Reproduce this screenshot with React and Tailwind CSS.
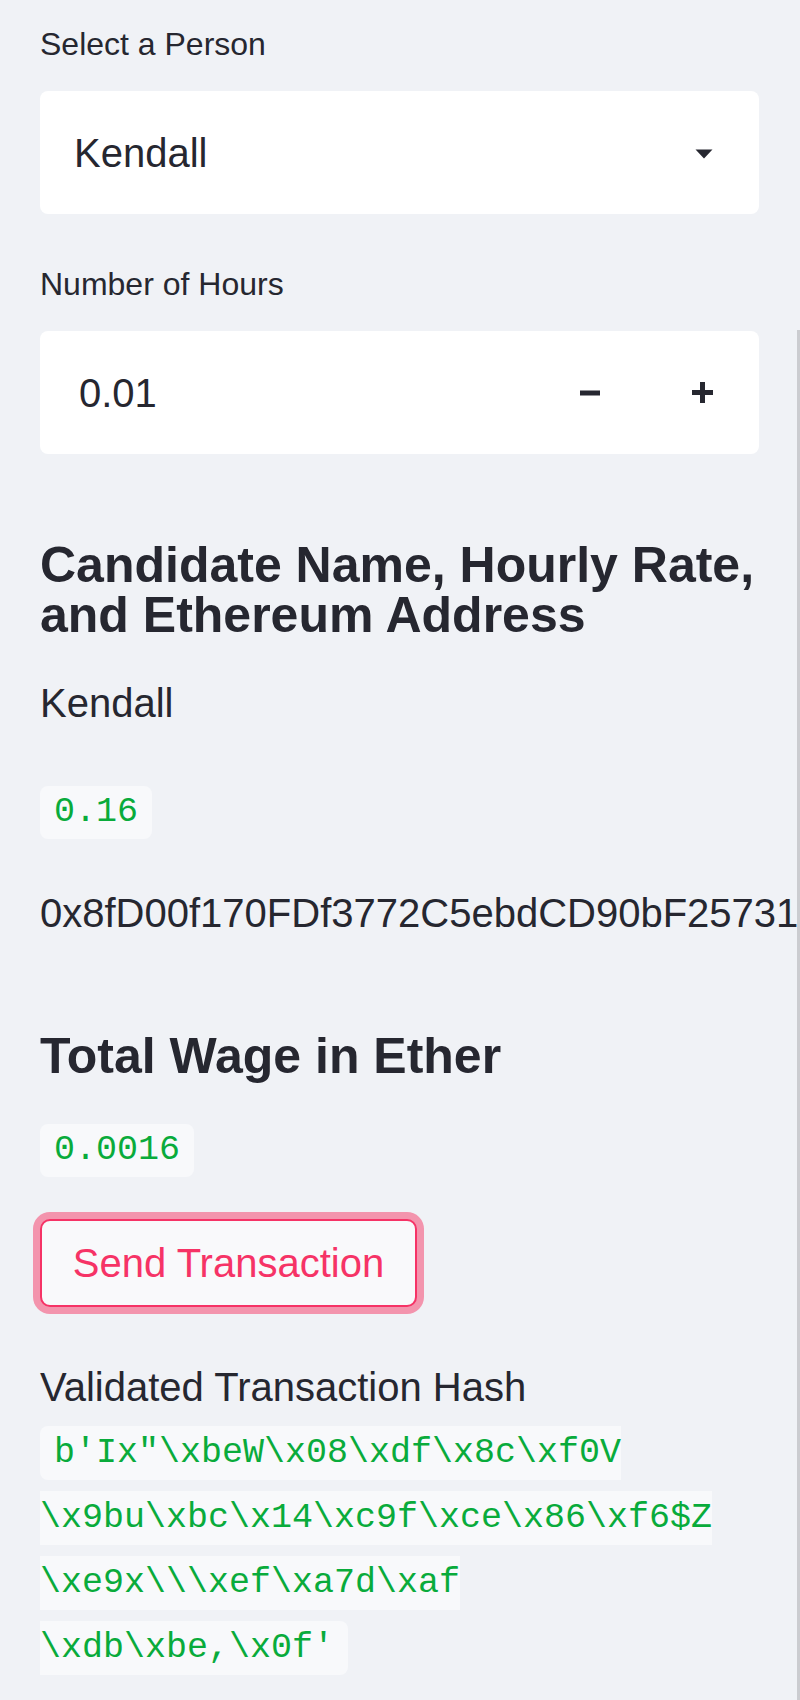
import React from 'react';

const sans = { fontFamily: '"Liberation Sans", Arial, sans-serif' };
const mono = { fontFamily: '"Liberation Mono", "Courier New", monospace' };

const hashLines = [
  `b'Ix"\\xbeW\\x08\\xdf\\x8c\\xf0V`,
  '\\x9bu\\xbc\\x14\\xc9f\\xce\\x86\\xf6$Z',
  '\\xe9x\\\\\\xef\\xa7d\\xaf',
  "\\xdb\\xbe,\\x0f'",
];

// little green code chip, like st.code inline values
const Chip = ({ children, className = '' }) => (
  <div
    className={`w-fit h-[53px] px-[14px] rounded-lg bg-[#f8f9fb] text-[35px] leading-[53px] text-[#09ab3b] ${className}`}
    style={mono}
  >
    {children}
  </div>
);

const App = () => {
  return (
    <div
      className="relative min-h-[1700px] w-full overflow-hidden bg-[#f0f2f6] text-[#262730] pt-[24px] pl-[40px] pr-[41px]"
      style={sans}
    >
      {/* Select a Person */}
      <div className="text-[32px] leading-[40px]">Select a Person</div>
      <div className="mt-[27px] h-[123px] rounded-lg bg-white flex items-center justify-between pl-[34px] pr-[46px]">
        <span className="text-[40px] leading-[48px]">Kendall</span>
        <svg width="18" height="10" viewBox="0 0 18 10" className="mt-[3px]">
          <path d="M0.5 0.5 H17.5 L9 9.5 Z" fill="#262730" />
        </svg>
      </div>

      {/* Number of Hours */}
      <div className="mt-[50px] text-[32px] leading-[40px]">Number of Hours</div>
      <div className="mt-[27px] h-[123px] rounded-lg bg-white flex items-stretch">
        <div className="flex-1 flex items-center pl-[39px]">
          <span className="text-[40px] leading-[48px]">0.01</span>
        </div>
        <div className="w-[112px] flex items-center justify-center">
          <svg width="20" height="6" viewBox="0 0 20 6">
            <rect x="0" y="0.5" width="20" height="5" fill="#262730" />
          </svg>
        </div>
        <div className="w-[113px] flex items-center justify-center">
          <svg width="21" height="21" viewBox="0 0 21 21">
            <rect x="0" y="8" width="21" height="5" fill="#262730" />
            <rect x="8" y="0" width="5" height="21" fill="#262730" />
          </svg>
        </div>
      </div>

      {/* Candidate details */}
      <h3 className="mt-[86px] text-[50px] leading-[50px] font-bold">
        Candidate Name, Hourly Rate,
        <br />
        and Ethereum Address
      </h3>
      <div className="mt-[39px] text-[40px] leading-[48px]">Kendall</div>
      <Chip className="mt-[59px]">0.16</Chip>
      <div className="mt-[50px] text-[40px] leading-[48px] whitespace-nowrap">
        0x8fD00f170FDf3772C5ebdCD90bF257316c69BA45
      </div>

      {/* Wage */}
      <h3 className="mt-[94px] text-[50px] leading-[50px] font-bold">Total Wage in Ether</h3>
      <Chip className="mt-[43px]">0.0016</Chip>

      <button
        className="mt-[42px] block w-[377px] h-[88px] rounded-[10px] border-2 border-[#f63366] bg-[#f9f9fb] text-[#f63366] text-[40px] leading-[48px] shadow-[0_0_0_7px_#f394ad]"
        style={sans}
      >
        Send Transaction
      </button>

      {/* Hash */}
      <div className="mt-[56px] text-[40px] leading-[48px]">Validated Transaction Hash</div>
      <div className="mt-[10px] text-[35px] leading-[65px]" style={mono}>
        <span className="bg-[#f8f9fb] text-[#09ab3b] px-[14px] py-[7px] rounded-lg leading-[65px]">
          {hashLines.map((line, i) => (
            <React.Fragment key={i}>
              {line}
              {i < hashLines.length - 1 && <br />}
            </React.Fragment>
          ))}
        </span>
      </div>

      {/* sidebar scrollbar edge */}
      <div className="absolute right-0 top-[330px] bottom-0 w-[3px] bg-[#cbccd0]" />
    </div>
  );
};

export default App;
